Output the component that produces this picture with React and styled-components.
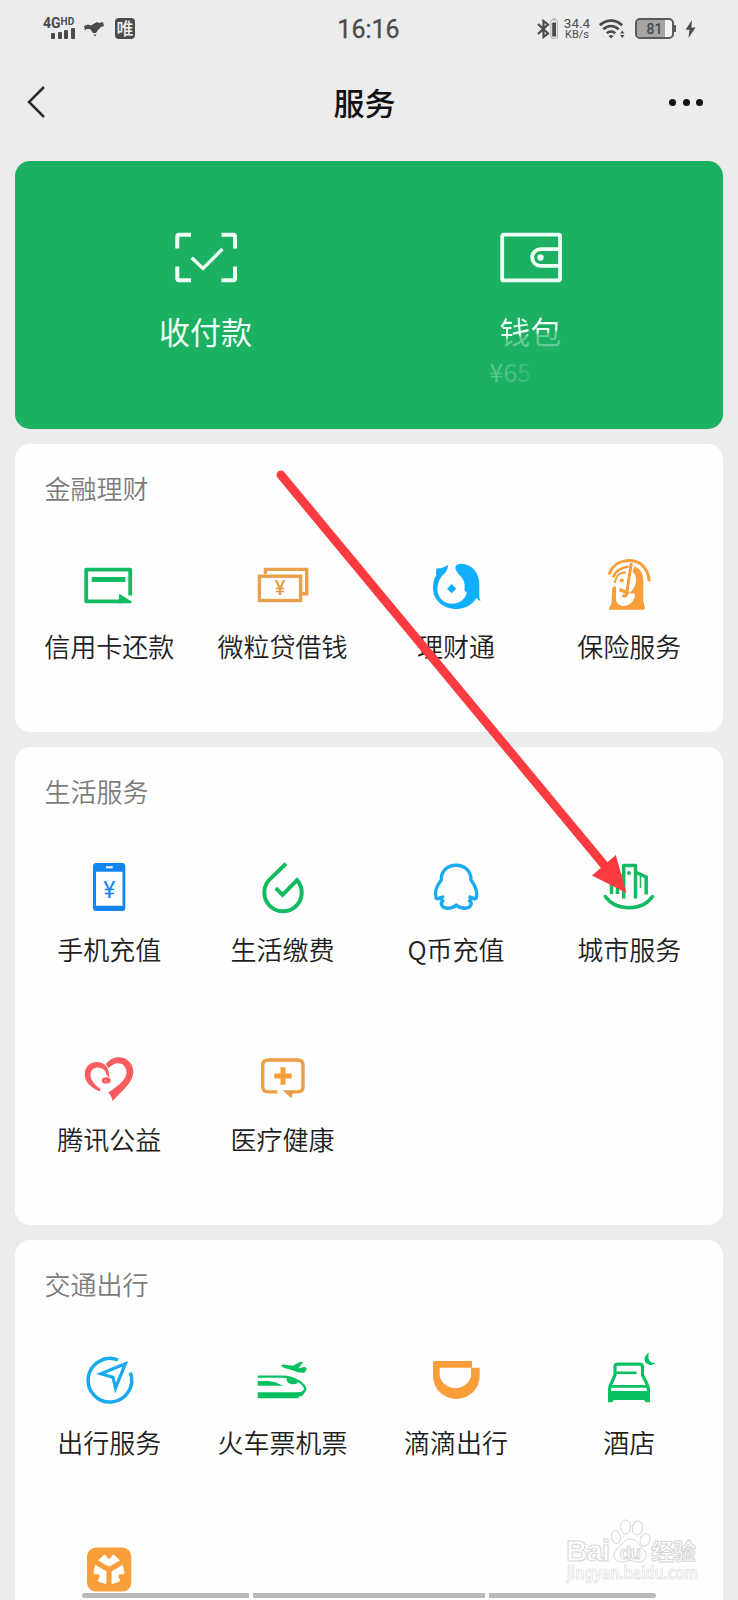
import React from 'react';
import styled, { createGlobalStyle } from 'styled-components';

const GlobalStyle = createGlobalStyle`
  * { box-sizing: border-box; }
  body {
    margin: 0;
    background: #ececec;
    font-family: 'Noto Sans CJK SC', 'Noto Sans', sans-serif;
  }
`;

const GREEN = '#12bb61';
const ORANGE = '#fa9d3b';
const AMBER = '#e8a04b';
const BLUE = '#10aeff';

const Screen = styled.div`
  position: relative;
  width: 738px;
  height: 1600px;
  overflow: hidden;
  background: #ececec;
`;

const StatusBar = styled.header`
  display: grid;
  grid-template-columns: 1fr auto 1fr;
  align-items: center;
  height: 57px;
  padding: 0 42px 0 43px;
  color: #4b4b4b;
  font-family: Roboto, sans-serif;
`;

const StatusGroup = styled.div`
  display: flex;
  align-items: center;
  justify-content: ${(p) => (p.$end ? 'flex-end' : 'flex-start')};
`;

const Clock = styled.span`
  padding: 2px 2px 0 0;
  font-size: 25px;
  font-weight: 400;
  line-height: 30px;
  -webkit-text-stroke: 0.3px currentColor;
`;

const Signal = styled.div`
  display: flex;
  flex-direction: column;
  width: 32px;
  margin-right: 9px;
`;

const Network = styled.div`
  display: flex;
  align-items: flex-start;
  height: 10px;
  font-size: 14px;
  font-weight: 700;
  line-height: 10px;
  sup { font-size: 10px; line-height: 8px; }
`;

const Bars = styled.div`
  display: flex;
  align-items: flex-end;
  gap: 2.5px;
  height: 11px;
  margin-left: 8px;
`;

const Bar = styled.i`
  width: 4px;
  height: ${(p) => p.$h}px;
  border-radius: 1px;
  background: currentColor;
`;

const AppBadge = styled.span`
  width: 20px;
  height: 21px;
  margin-left: 11px;
  border-radius: 4px;
  background: #4b4b4b;
  color: #f2f2f2;
  font: 500 17px/20px 'Noto Sans CJK SC', sans-serif;
  text-align: center;
`;

const Speed = styled.div`
  display: flex;
  flex-direction: column;
  width: 28px;
  margin: 0 8px 0 5px;
  align-items: center;
  font-size: 13.5px;
  line-height: 11px;
  small { font-size: 11px; line-height: 11px; }
`;

const Battery = styled.div`
  width: 39px;
  height: 21px;
  margin-left: 10px;
  border: 2px solid #5a5a5a;
  border-radius: 5px;
  background: linear-gradient(90deg, #a5a5a5 28px, #f4f4f4 28px);
  background-clip: padding-box;
  font-size: 14px;
  font-weight: 500;
  line-height: 18px;
  text-align: center;
`;

const BatteryCap = styled.i`
  width: 2px;
  height: 7px;
  margin-right: 9px;
  background: #5a5a5a;
`;

const NavBar = styled.nav`
  display: grid;
  grid-template-columns: 1fr auto 1fr;
  align-items: center;
  height: 90px;
  padding: 0 35px 0 27px;
`;

const NavTitle = styled.h1`
  margin: 0;
  padding-right: 1px;
  color: #111;
  font-size: 31px;
  font-weight: 500;
  line-height: 40px;
`;

const MoreDots = styled.div`
  display: flex;
  justify-content: flex-end;
  gap: 6.4px;
  i { width: 7px; height: 7px; border-radius: 50%; background: #111; }
`;

const Main = styled.main`
  display: flex;
  flex-direction: column;
  gap: 15px;
  padding: 14px 15px 0;
`;

const PayCard = styled.section`
  display: grid;
  grid-template-columns: 1fr 1fr;
  height: 268px;
  padding: 70px 30px 0 28px;
  border-radius: 15px;
  background: #1cb062;
  color: #effff5;
`;

const PayEntry = styled.div`
  display: flex;
  flex-direction: column;
  align-items: center;
`;

const PayLabel = styled.span`
  margin-top: 26px;
  font-size: 31px;
  line-height: 42px;
  ${(p) => p.$faded && `
    background: linear-gradient(172deg, #effff5 54%, rgba(239, 255, 245, 0.35) 60%);
    background-clip: text;
    color: transparent;
  `}
`;

const Balance = styled.span`
  width: 82px;
  margin-top: 2px;
  background: linear-gradient(90deg, rgba(255, 255, 255, 0.3), rgba(255, 255, 255, 0.18) 30px, transparent 48px);
  background-clip: text;
  color: transparent;
  font-size: 25px;
  line-height: 34px;
`;

const Card = styled.section`
  padding: 0 7px 7px 7.5px;
  border-radius: 15px;
  background: #fefefe;
`;

const CardTitle = styled.h2`
  margin: 0;
  padding: 0 0 2px 22px;
  color: #7c7c7c;
  font-size: 26px;
  font-weight: 350;
  line-height: 88px;
`;

const Services = styled.div`
  display: grid;
  grid-template-columns: repeat(4, 173.4px);
  grid-auto-rows: 190.6px;
`;

const Service = styled.div`
  display: flex;
  flex-direction: column;
  align-items: center;
  padding-top: 23px;
`;

const ServiceLabel = styled.span`
  margin-top: 15px;
  color: #1f1f1f;
  font-size: 26px;
  font-weight: 350;
  line-height: 36px;
  white-space: nowrap;
`;

const Glyph = styled.svg`
  display: block;
  flex: none;
  width: 56px;
  height: 56px;
  overflow: visible;
  fill: none;
`;

const Overlay = styled.svg`
  position: absolute;
  left: 0;
  top: 0;
  pointer-events: none;
`;

const Watermark = styled.svg`
  position: absolute;
  right: 36px;
  bottom: 12px;
  pointer-events: none;
`;

const BottomStrip = styled.div`
  position: absolute;
  left: 82px;
  bottom: 2px;
  display: flex;
  gap: 4px;
`;

const Segment = styled.i`
  width: ${(p) => p.$w}px;
  height: 5px;
  border-radius: ${(p) => p.$r || '0'};
  background: #b9b9b9;
`;

const CreditCard = () => (
  <Glyph stroke={GREEN} strokeWidth="3.8">
    <path d="M49.2 38.5V12.6H5.2V44.4H41" strokeLinejoin="round" />
    <path d="M10.7 22.5H44.3" strokeWidth="5" />
    <path d="M38.3 36.8L51 44.8L50 46.3H37.5Z" fill={GREEN} stroke="none" />
  </Glyph>
);

const Banknotes = () => (
  <Glyph stroke={AMBER} strokeWidth="3.4">
    <path d="M10.4 17V12.4H51.7V36.7H47" />
    <rect x="4.4" y="19.2" width="41.2" height="24.3" />
    <text x="25" y="37.7" textAnchor="middle" fontFamily="Roboto, sans-serif" fontSize="20" fontWeight="500" fill={AMBER} stroke="none">¥</text>
  </Glyph>
);

const TwinFish = () => (
  <Glyph>
    <path fill={BLUE} d="M8.7 11.3Q15 11.5 20.2 7.7Q20 12 17.5 15.5Q9.5 22 9.3 32C9.5 41 16 46.7 24 46.7C32 46.5 38 42 38.8 34.5Q36.2 35.5 36.5 32.5Q38 23 30.5 17Q25.5 11 28.5 8.3Q30 6.7 33 6.7C44 7.5 51.3 15 51.3 27V38Q51 41 52.5 44Q50 43.5 48.5 41C44 48 37 52 28.5 52C15 52 5 43 5 31Q5 23 8.3 18Q7.5 14 8.7 11.3Z" />
    <path fill={BLUE} d="M23.7 26.9L28.3 31.7L23.7 36.3L19.1 31.7Z" />
  </Glyph>
);

const Insurance = () => (
  <Glyph stroke={ORANGE} strokeWidth="3">
    <path d="M8 17.5C11 8.5 19 3.6 29 3.6C40 3.8 47.5 12 48.3 24.5" />
    <path d="M12 20.5C14.5 13.5 20 10.5 27.5 9.5" strokeWidth="2.4" />
    <path d="M33 9.5C39 11 42.3 16 42.3 24V44L44 51Q44 53 40 52.8H8Q7.5 50 10.5 47L11.2 31Q13 28 15 30V43C16 48 21 50 26 48.5C31 46.5 34 42 34 36.5H28.5L33.5 30Q37.5 20 31.5 14.5Z" fill={ORANGE} stroke="none" />
    <path d="M30.3 6L25.5 37.5Q24.5 40.5 21.5 38" strokeWidth="3" />
    <path d="M25 15.5Q17.5 15.5 15.5 20.5L13.5 26" strokeWidth="2" />
    <path d="M18.5 32.5L28 36.5" strokeWidth="3.4" />
    <circle cx="20.8" cy="23.5" r="2" fill={ORANGE} stroke="none" />
  </Glyph>
);

const PhoneTopUp = () => (
  <Glyph>
    <path fill="#1485ee" fillRule="evenodd" d="M15 3H41.5Q44.3 3 44.3 6V48Q44.3 51 41.5 51H15Q12 51 12 48V6Q12 3 15 3ZM15 11.7V45.7H41.5V11.7Z" />
    <path d="M25 7.3H31.7" stroke="#fff" strokeWidth="2" />
    <text x="28.3" y="37.5" textAnchor="middle" fontFamily="Roboto, sans-serif" fontSize="23" fontWeight="400" fill="#1485ee">¥</text>
  </Glyph>
);

const Utilities = () => (
  <Glyph stroke={GREEN} strokeWidth="4">
    <path d="M31 3.6L15.3 18.9A18.7 18.7 0 1 0 42 20.2L27.5 35L20.8 28.2" />
  </Glyph>
);

const Penguin = () => (
  <Glyph stroke="#1aabee" strokeWidth="3.4" strokeLinejoin="round">
    <path d="M28 5.2C19 5.2 13 11.5 13.3 20C8.5 26 6.3 33 8.3 38.3Q9.5 39.5 13 37.5Q13 39.5 15 41C12 42.5 13 48.3 19.5 48.3Q25 48.3 28.3 45Q31.5 48.3 37 48.3C43.5 48.3 44.5 42.5 41.5 41Q43.5 39.5 43.5 37.5Q46.5 39.5 48 38.3C49.7 33 47.7 26 43 20C43 11.5 37.3 5.2 28 5.2Z" />
    <path d="M12 38L16 36.5M44.5 38L40.5 36.5" strokeWidth="3" />
  </Glyph>
);

const City = () => (
  <Glyph stroke={GREEN} strokeWidth="3.5">
    <path d="M4.3 36.5C15 51.5 41 51.5 51.5 36.5" strokeLinecap="round" />
    <path d="M22.7 38.5V5.5H34.5V38.5" strokeLinejoin="round" />
    <path d="M22 16H10.5V34M35.5 12.5L45.2 17V34.5" />
    <path d="M39.5 15V28" strokeWidth="1.5" />
    <path d="M16.5 28V34" />
    <circle cx="28" cy="13" r="2" fill={GREEN} stroke="none" />
  </Glyph>
);

const Charity = () => (
  <Glyph fill="#fa5b5e">
    <g fill="#fa5b5e">
      <path d="M19.5 41.6C10 38 3.7 32 3.7 24C4 16 10 11.8 16.5 12C24 12.5 28.5 18 27.8 26.5C25 20 21 17.3 16.5 17.5C12 18 9.3 21 9.5 25.5C10 31 14 35 19 38.7Z" />
      <path d="M24.8 14.3C28 9.5 33 7.2 37.7 7.2C46 7.2 52.3 13.5 52.3 22C52 32 43 39 31.5 51Q30.5 45 27.2 42.7C36 36 45.5 31 45.5 22C45.5 15.5 40 12 34.5 13.5Q31 14.5 27.5 18Z" />
      <ellipse cx="25.2" cy="30.4" rx="4.4" ry="3.2" />
      <path d="M24 18Q28.5 22 28.3 28L25 24Z" />
    </g>
    <path d="M23.5 30.6L25.5 30" stroke="#fff" strokeWidth="0.6" />
  </Glyph>
);

const Medical = () => (
  <Glyph stroke="#ee9f43" strokeWidth="3.4">
    <path d="M22.5 41.9H13Q7.7 41.9 7.7 36.6V15.2Q7.7 10 13 10H42.7Q48 10 48 15.2V36.6Q48 41.9 42.7 41.9H36" />
    <path d="M27.5 40.2H38.5L36.3 48.3Z" fill={AMBER} stroke="none" />
    <path d="M28 17.3V34.7M19.3 26H36.7" strokeWidth="5" stroke={ORANGE} />
  </Glyph>
);

const Travel = () => (
  <Glyph stroke="#18a9f0" strokeWidth="3.5">
    <path d="M37 7A21.8 21.8 0 1 0 49.3 19.6" />
    <path d="M44.3 10.8L19.8 20.7L32 24.3L34.5 35.2Z" strokeWidth="3.2" />
  </Glyph>
);

const TrainPlane = () => (
  <Glyph fill="#07c160">
    <g fill="#07c160">
      <path d="M2.7 39.3H42Q49 39 49.8 36.5Q50 43 43.7 43.5V45.3H2.7Z" />
      <path d="M2.7 28H14Q21 28.5 28 32.7H2.7Z" />
      <path d="M31.5 25Q39 24.5 43 30Q38 32.5 33.5 30Q31 28 31.5 25Z" />
      <path d="M26 12.2Q28 11 32 12L38 12.8L44 9.5Q46 8.4 48 9.2L43.5 15.5L49 14Q51.5 14 51.8 16L49.5 19.7Q44 20.5 38 17.5L28 14.5Z" />
    </g>
    <path d="M2.7 23.6H26Q37 23.5 44 28.5Q51 33 50 37Q48.5 40.5 43 41" stroke="#07c160" strokeWidth="2.4" fill="none" />
  </Glyph>
);

const Didi = () => (
  <Glyph>
    <path fill={ORANGE} fillRule="evenodd" d="M5 9.5Q5 8 6.5 8H44V14.7H51.7V22.7A23.3 23.3 0 0 1 5 22.7ZM11.7 14.7V23.2A16.2 16.2 0 0 0 43 23.2V14.7Z" />
  </Glyph>
);

const Hotel = () => (
  <Glyph stroke="#07c160" strokeWidth="3.2">
    <path d="M8.6 36.5Q8.6 33 10.5 30L14 22V14Q14 11.2 17 11.2H38.5Q41.5 11.2 41.5 14V22L45.5 30Q47.4 33 47.4 36.5" />
    <path d="M15 19.8H35.5" strokeWidth="2.6" />
    <path d="M9.5 33.4H46.5" strokeWidth="2.8" />
    <path d="M7 35H10V38H46V35H49V49.3H45L43 47H13L11 49.3H7Z" fill="#07c160" stroke="none" />
    <path d="M48 -0.3C42.5 2 42.5 8.5 46 10.7C49 13 53 12 54.3 9.8C49 10.5 46 6 48 -0.3Z" fill="#07c160" stroke="none" />
  </Glyph>
);

const BLADE = 'M0 -3.5L-10.5 -9.5L-5 -14.5H-3.5L-2 -11.5L0 -10.5L2 -11.5L3.5 -14.5H5L10.5 -9.5Z';

const Parcel = () => (
  <Glyph>
    <rect x="6" y="4.6" width="44.3" height="44" rx="9" fill={ORANGE} />
    <g transform="translate(28 26.8)" fill="#fff" stroke="#fff" strokeWidth="0.8" strokeLinejoin="round">
      {[0, 120, 240].map((a) => (
        <path key={a} d={BLADE} transform={`rotate(${a})`} />
      ))}
    </g>
  </Glyph>
);

const SECTIONS = [
  {
    title: '金融理财',
    items: [['信用卡还款', CreditCard], ['微粒贷借钱', Banknotes], ['理财通', TwinFish], ['保险服务', Insurance]],
  },
  {
    title: '生活服务',
    items: [['手机充值', PhoneTopUp], ['生活缴费', Utilities], ['Q币充值', Penguin], ['城市服务', City], ['腾讯公益', Charity], ['医疗健康', Medical]],
  },
  {
    title: '交通出行',
    items: [['出行服务', Travel], ['火车票机票', TrainPlane], ['滴滴出行', Didi], ['酒店', Hotel], ['', Parcel]],
  },
];

export default function App() {
  return (
    <Screen>
      <GlobalStyle />
      <StatusBar>
        <StatusGroup>
          <Signal>
            <Network>4G<sup>HD</sup></Network>
            <Bars><Bar $h={6} /><Bar $h={7} /><Bar $h={9} /><Bar $h={11} /></Bars>
          </Signal>
          <svg width="20" height="16" viewBox="0 0 20 16" fill="#4b4b4b">
            <path d="M0 5L4 3.5L7 4.5L13 1L15 2L19 1L20 5L17 6L14 9L12 12H9L6 8L2 8L1 10Z" />
            <path d="M9.5 13.5H12.5L11 15.5Z" />
          </svg>
          <AppBadge>唯</AppBadge>
        </StatusGroup>
        <Clock>16:16</Clock>
        <StatusGroup $end>
          <svg width="13" height="20" viewBox="0 0 13 20" fill="none" stroke="#4b4b4b" strokeWidth="2.2">
            <path d="M1 5L11 14.5L6.5 18V2L11 5.5L1 15" />
          </svg>
          <svg width="8" height="21" viewBox="0 0 8 21">
            <rect x="0.9" y="2" width="6.4" height="18.2" rx="1" fill="#f2f2f2" stroke="#aaa" />
            <path d="M2.5 1H5.7" stroke="#aaa" strokeWidth="1.5" />
            <rect x="2.2" y="4.5" width="3.8" height="14" fill="#4b4b4b" />
          </svg>
          <Speed>34.4<small>KB/s</small></Speed>
          <svg width="26" height="20" viewBox="0 0 26 20" fill="none" stroke="#4b4b4b" strokeWidth="2.8">
            <path d="M0.8 6.2C7.5 0 16.5 0 23.2 6.2" />
            <path d="M4.3 10.3C9 6 15 6 19.7 10.3" />
            <path d="M7.8 14.2C10.3 12 13.7 12 16.2 14.2" />
            <path d="M9.5 17Q12 14.8 14.5 17L12 19.5Z" fill="#4b4b4b" stroke="none" />
            <path d="M21 14.5L23.3 11.5L25.5 14.5ZM21 16L23.3 19L25.5 16Z" fill="#4b4b4b" stroke="none" />
          </svg>
          <Battery>81</Battery>
          <BatteryCap />
          <svg width="11" height="18" viewBox="0 0 11 18" fill="#4b4b4b">
            <path d="M7 0L0.5 9.8H4.5L3.5 18L10.5 7.5H6.3Z" />
          </svg>
        </StatusGroup>
      </StatusBar>

      <NavBar>
        <svg width="20" height="34" viewBox="0 0 20 34" fill="none" stroke="#2b2b2b" strokeWidth="2.5">
          <path d="M17 2L2 17L17 32" />
        </svg>
        <NavTitle>服务</NavTitle>
        <MoreDots><i /><i /><i /></MoreDots>
      </NavBar>

      <Main>
        <PayCard>
          <PayEntry>
            <svg width="64" height="53" viewBox="0 0 64 53" fill="none" stroke="#effff5" strokeWidth="4">
              <path d="M3.3 17.5V5.5Q3.3 3.7 5 3.7H17M47.5 3.7H59.5Q61 3.7 61 5.5V17.5M61 35.5V47.5Q61 49.2 59.5 49.2H47.5M17 49.2H5Q3.3 49.2 3.3 47.5V35.5" />
              <path d="M17.7 26.8L29 37.5L48.5 18" strokeWidth="3.4" />
            </svg>
            <PayLabel>收付款</PayLabel>
          </PayEntry>
          <PayEntry>
            <svg width="64" height="53" viewBox="0 0 64 53" fill="none" stroke="#effff5" strokeWidth="3.8">
              <rect x="3.2" y="3.6" width="57.8" height="45.8" rx="1.5" />
              <path d="M60 18.2H41.5A8.3 8.3 0 0 0 41.5 34.8H60" />
              <circle cx="41.5" cy="26.5" r="3.2" fill="#effff5" stroke="none" />
            </svg>
            <PayLabel $faded>钱包</PayLabel>
            <Balance>¥65</Balance>
          </PayEntry>
        </PayCard>

        {SECTIONS.map(({ title, items }) => (
          <Card key={title}>
            <CardTitle>{title}</CardTitle>
            <Services>
              {items.map(([label, Icon], i) => (
                <Service key={i}>
                  <Icon />
                  <ServiceLabel>{label}</ServiceLabel>
                </Service>
              ))}
            </Services>
          </Card>
        ))}
      </Main>

      <BottomStrip>
        <Segment $w={167} $r="3px 0 0 3px" />
        <Segment $w={231.5} />
        <Segment $w={167.5} $r="0 3px 3px 0" />
      </BottomStrip>

      <Watermark width="138" height="70" viewBox="0 0 138 70" fill="#fff" stroke="#d6d6d6" strokeWidth="1">
        <g fontFamily="'Liberation Sans', sans-serif" fontWeight="700">
          <text x="2" y="43" fontSize="30" textLength="44">Bai</text>
          <ellipse cx="52" cy="19" rx="4.5" ry="6.5" transform="rotate(-15 52 19)" />
          <ellipse cx="61.5" cy="9" rx="5" ry="7" />
          <ellipse cx="73.5" cy="10" rx="5" ry="7" transform="rotate(12 73.5 10)" />
          <ellipse cx="81" cy="22" rx="4.8" ry="6.5" transform="rotate(20 81 22)" />
          <path d="M66.5 21C73 21 74 27 79 31C85 36 82 44 75 44C71 44 69 42.5 66.5 42.5C63 42.5 61 44.5 57 44C49 43 48 35 54 30C59 26 60 21 66.5 21Z" />
          <text x="56" y="41" fontSize="18" textLength="21">du</text>
          <text x="87" y="42" fontSize="23" fontFamily="'Noto Sans CJK SC', sans-serif" textLength="45">经验</text>
        </g>
        <text x="3" y="61" fontSize="17" strokeWidth="0.6" fontFamily="'Noto Sans', sans-serif" fontWeight="600" textLength="131" lengthAdjust="spacingAndGlyphs">jingyan.baidu.com</text>
      </Watermark>

      <Overlay width="738" height="1600" viewBox="0 0 738 1600" fill="#fb3b3f">
        <path d="M281 475L605 866" stroke="#fb3b3f" strokeWidth="8.8" strokeLinecap="round" />
        <path d="M626.5 893L615.8 855L592 875.5Z" />
      </Overlay>
    </Screen>
  );
}
